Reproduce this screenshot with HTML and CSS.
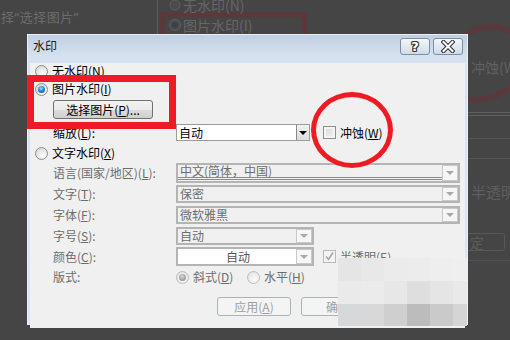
FILE: index.html
```html
<!DOCTYPE html>
<html lang="zh-CN">
<head>
  <meta charset="UTF-8" />
  <meta name="viewport" content="width=device-width, initial-scale=1.0"/>
  <title>水印</title>
  <link rel="stylesheet" href="styles.css">
</head>
<body>
  <div class="screen">
    <!-- dimmed screenshot behind the dialog -->
    <svg class="backdrop" width="510" height="340" viewBox="0 0 510 340">
      <line x1="157.5" y1="0" x2="157.5" y2="34" stroke="#5e5e5e"/>
      <circle cx="175" cy="5" r="5" fill="#4b4b4b" stroke="#5f5f5f"/>
      <circle cx="175" cy="25" r="5.5" fill="#4b4b4b" stroke="#5f5f5f"/>
      <circle cx="175" cy="25" r="2.8" fill="#36414c"/>
      <rect x="162.5" y="14.5" width="142" height="40" fill="none" stroke="#5b383c" stroke-width="5"/>
      <path d="M461 37 Q488 19 514 33" fill="none" stroke="#5b383c" stroke-width="5"/>
      <path d="M466 99 Q492 102 514 85" fill="none" stroke="#5b383c" stroke-width="5"/>
      <line x1="468" y1="112.5" x2="510" y2="112.5" stroke="#606060"/>
      <line x1="468" y1="115.5" x2="510" y2="115.5" stroke="#606060"/>
      <line x1="468" y1="138.5" x2="510" y2="138.5" stroke="#555"/>
      <line x1="468" y1="158.5" x2="510" y2="158.5" stroke="#555"/>
      <rect x="466.5" y="233.5" width="38" height="17" rx="2" fill="none" stroke="#585858"/>
      <line x1="468" y1="260.5" x2="510" y2="260.5" stroke="#515151"/>
    </svg>
    <span class="bg-text bg-caption">择“选择图片”</span>
    <span class="bg-text bg-opt1">无水印(N)</span>
    <span class="bg-text bg-opt2">图片水印(I)</span>
    <span class="bg-text bg-erode">冲蚀(W)</span>
    <span class="bg-text bg-semi">半透明</span>
    <span class="bg-text bg-ok">定</span>

    <div class="dialog">
      <div class="titlebar">
        <span class="title">水印</span>
        <div class="tb-buttons">
          <span class="tb-btn"><span class="help">?</span></span>
          <span class="tb-btn">
            <svg width="14" height="13" viewBox="0 0 14 13">
              <path d="M2.5 2 L11.5 11 M11.5 2 L2.5 11" stroke="#3a3a3a" stroke-width="4.2" stroke-linecap="square"/>
              <path d="M2.5 2 L11.5 11 M11.5 2 L2.5 11" stroke="#fff" stroke-width="2" stroke-linecap="square"/>
            </svg>
          </span>
        </div>
      </div>

      <div class="panel">
        <div class="row r-none">
          <span class="radio"></span>无水印(<u>N</u>)
        </div>
        <div class="row r-pic">
          <span class="radio on"></span>图片水印(<u>I</u>)
        </div>
        <div class="row r-choose">
          <span class="button">选择图片(<u>P</u>)...</span>
        </div>
        <div class="row r-scale">
          <span class="lbl">缩放(<u>L</u>):</span>
          <span class="select"><span class="val">自动</span><span class="drop"></span></span>
          <span class="check"></span>冲蚀(<u>W</u>)
        </div>
        <div class="row r-text">
          <span class="radio"></span>文字水印(<u>X</u>)
        </div>
        <div class="row r-lang off">
          <span class="lbl">语言(国家/地区)(<u>L</u>):</span>
          <span class="combo wide"><span class="val lined">中文(简体，中国)</span><span class="drop"></span></span>
        </div>
        <div class="row r-word off">
          <span class="lbl">文字(<u>T</u>):</span>
          <span class="combo wide"><span class="val">保密</span><span class="drop"></span></span>
        </div>
        <div class="row r-font off">
          <span class="lbl">字体(<u>F</u>):</span>
          <span class="combo wide"><span class="val">微软雅黑</span><span class="drop"></span></span>
        </div>
        <div class="row r-size off">
          <span class="lbl">字号(<u>S</u>):</span>
          <span class="combo short"><span class="val">自动</span><span class="drop"></span></span>
        </div>
        <div class="row r-color off">
          <span class="lbl">颜色(<u>C</u>):</span>
          <span class="combo short white"><span class="val centered">自动</span><span class="drop"></span></span>
          <span class="check checked">
            <svg width="11" height="11" viewBox="0 0 11 11"><path d="M2 5.5 L4.5 8.5 L9 1.5" fill="none" stroke="#a6a6a6" stroke-width="1.6"/></svg>
          </span>半透明(<u>E</u>)
        </div>
        <div class="row r-layout off">
          <span class="lbl">版式:</span>
          <span class="opt first"><span class="radio dim on"></span>斜式(<u>D</u>)</span>
          <span class="opt"><span class="radio dim"></span>水平(<u>H</u>)</span>
        </div>
        <div class="row r-buttons">
          <span class="btn">应用(<u>A</u>)</span>
          <span class="btn">确定</span>
          <span class="btn">取消</span>
        </div>
      </div>
    </div>

    <div class="mark-rect"></div>
    <div class="mark-ring"></div>

    <div class="mosaic">
      <span></span><span></span><span></span><span></span><span></span><span></span>
      <span></span><span></span><span></span><span></span><span></span><span></span>
      <span></span><span></span><span></span><span></span><span></span><span></span>
    </div>
  </div>
</body>
</html>
```

FILE: styles.css
```css
* {
  box-sizing: border-box;
}

body {
  margin: 0;
  background: #454545;
  font-family: "Noto Sans CJK SC", "Noto Sans", sans-serif;
}

.screen {
  position: relative;
  width: 510px;
  height: 340px;
  overflow: hidden;
  background: #454545;
}

.backdrop {
  position: absolute;
  left: 0;
  top: 0;
}

.bg-text {
  position: absolute;
  color: #666;
  font-size: 14px;
  line-height: 16px;
  white-space: nowrap;
}

.bg-caption {
  left: 1px;
  top: 9px;
  font-family: "Noto Sans", "Noto Sans CJK SC", sans-serif;
  font-size: 13px;
  letter-spacing: 0.5px;
  color: #6b6b6b;
}

.bg-opt1 {
  left: 183px;
  top: -3px;
}

.bg-opt2 {
  left: 183px;
  top: 17px;
}

.bg-erode {
  left: 471px;
  top: 59px;
  color: #616161;
}

.bg-semi {
  left: 471px;
  top: 184px;
  font-size: 15px;
  color: #5f5f5f;
}

.bg-ok {
  left: 470px;
  top: 234px;
  color: #5c5c5c;
}

/* dialog window */
.dialog {
  position: absolute;
  left: 27px;
  top: 34px;
  width: 441px;
  height: 291px;
  border: 1px solid #eaf0f7;
  background: linear-gradient(#c0d0e1, #d6e2ef 22px, #dae6f3);
}

.titlebar {
  height: 22px;
  display: flex;
  align-items: flex-start;
  justify-content: space-between;
  padding: 0 4px 0 5px;
}

.title {
  font-size: 12px;
  line-height: 22px;
  color: #1e1e1e;
}

.tb-buttons {
  display: flex;
  gap: 3px;
  margin-top: 3px;
}

.tb-btn {
  width: 30px;
  height: 17px;
  border: 1px solid #7b8ea6;
  border-radius: 3px;
  background: linear-gradient(#f4f7fb, #e2e9f2 50%, #d0dbe8);
  display: flex;
  align-items: center;
  justify-content: center;
}

.help {
  font-family: "DejaVu Sans", sans-serif;
  font-weight: bold;
  font-size: 13px;
  line-height: 13px;
  color: #fff;
  text-shadow: 1px 0 #3a3a3a, -1px 0 #3a3a3a, 0 1px #3a3a3a, 0 -1px #3a3a3a,
    1px 1px #3a3a3a, -1px -1px #3a3a3a, 1px -1px #3a3a3a, -1px 1px #3a3a3a;
}

.panel {
  margin: 0 2px;
  height: 265px;
  background: #f0f0f0;
  font-size: 12px;
  color: #000;
}

.panel u {
  text-underline-offset: 1px;
}

.row {
  display: flex;
  align-items: center;
  line-height: 16px;
  white-space: nowrap;
}

.r-none { margin-top: 6px; height: 16px; padding-left: 5px; }
.r-pic { margin-top: 2px; height: 16px; padding-left: 5px; }
.r-choose { margin-top: 3px; height: 19px; padding-left: 23px; }
.r-scale { margin-top: 5px; height: 17px; }
.r-text { margin-top: 4px; height: 16px; padding-left: 5px; }
.r-lang { margin-top: 2px; height: 20px; }
.r-word { margin-top: 2px; height: 18px; }
.r-font { margin-top: 3px; height: 18px; }
.r-size { margin-top: 3px; height: 18px; }
.r-color { margin-top: 2px; height: 19px; }
.r-layout { margin-top: 3px; height: 16px; }
.r-buttons { margin-top: 12px; height: 19px; padding-left: 187px; gap: 10px; }

.off {
  color: #6d6d6d;
}

.lbl {
  width: 123px;
  margin-left: 23px;
}

/* radio buttons and checkboxes */
.radio {
  width: 13px;
  height: 13px;
  margin-right: 4px;
  border: 1px solid #8e8f8f;
  border-radius: 50%;
  background: radial-gradient(circle at 60% 65%, #ffffff, #e6e6e6 50%, #cfcfcf);
  display: flex;
  align-items: center;
  justify-content: center;
}

.radio.on::after {
  content: "";
  width: 7px;
  height: 7px;
  border-radius: 50%;
  background: radial-gradient(circle at 45% 35%, #a6e0ff, #2a86d4 45%, #0b4a8c);
}

.radio.dim {
  border-color: #bcbcbc;
  background: radial-gradient(circle at 60% 65%, #fbfbfb, #ececec 55%, #dddddd);
}

.radio.dim.on::after {
  background: radial-gradient(circle at 45% 35%, #d8d8d8, #a9a9a9 50%, #8e8e8e);
}

.check {
  width: 13px;
  height: 13px;
  margin: 0 4px 0 13px;
  border: 1px solid #8e8f8f;
  background: linear-gradient(135deg, #d6d6d6, #f6f6f6);
  box-shadow: inset 0 0 0 2px #f4f4f4;
  display: flex;
  align-items: center;
  justify-content: center;
}

.check.checked {
  margin-left: 9px;
  border-color: #b9b9b9;
  background: #f4f4f4;
  box-shadow: none;
}

/* buttons */
.button {
  width: 100px;
  height: 19px;
  border: 1px solid #707070;
  border-radius: 3px;
  background: linear-gradient(#f2f2f2, #ebebeb 50%, #dddddd 51%, #cfcfcf);
  display: flex;
  align-items: center;
  justify-content: center;
}

.btn {
  width: 74px;
  height: 19px;
  border: 1px solid #adb2b5;
  border-radius: 3px;
  background: #f4f4f4;
  color: #a0a0a0;
  display: flex;
  align-items: center;
  justify-content: center;
}

/* drop-down boxes */
.select {
  width: 134px;
  height: 17px;
  border: 1px solid #9c9c9c;
  background: #fff;
  display: flex;
}

.val {
  flex: 1;
  padding-left: 2px;
  display: flex;
  align-items: center;
}

.select .drop {
  width: 13px;
  background: linear-gradient(#f2f2f2, #dcdcdc);
  border-left: 1px solid #8a8a8a;
  display: flex;
  align-items: center;
  justify-content: center;
}

.select .drop::after {
  content: "";
  border-left: 4px solid transparent;
  border-right: 4px solid transparent;
  border-top: 4px solid #000;
}

.combo {
  height: 100%;
  border: 2px solid #b4b4b4;
  background: #f0f0f0;
  display: flex;
}

.combo.wide {
  width: 284px;
}

.combo.short {
  width: 138px;
}

.combo.white {
  background: #fff;
}

.val.centered {
  justify-content: center;
  color: #555;
}

.val.lined {
  border-bottom: 3px double #8c8c8c;
  margin-bottom: 1px;
}

.combo .drop {
  width: 16px;
  border: 1px solid #c9c9c9;
  background: #f6f6f6;
  display: flex;
  align-items: center;
  justify-content: center;
}

.combo .drop::after {
  content: "";
  border-left: 4px solid transparent;
  border-right: 4px solid transparent;
  border-top: 4px solid #a8a8a8;
}

.opt {
  display: flex;
  align-items: center;
}

.opt.first {
  width: 71px;
}

/* red annotations */
.mark-rect {
  position: absolute;
  left: 27px;
  top: 75px;
  width: 149px;
  height: 54px;
  border: 7px solid #ed1c24;
}

.mark-ring {
  position: absolute;
  left: 311px;
  top: 92px;
  width: 82px;
  height: 76px;
  border: 5px solid #ed1c24;
  border-radius: 50%;
}

/* pixelated patch */
.mosaic {
  position: absolute;
  left: 338px;
  top: 258px;
  display: grid;
  grid-template-columns: 23px 23px 23px 23px 23px 14px;
  grid-template-rows: 23px 23px 22px;
}

.mosaic span:nth-child(1) { background: #e5e5e5; }
.mosaic span:nth-child(2) { background: #e8e8e8; }
.mosaic span:nth-child(3) { background: #ebebeb; }
.mosaic span:nth-child(4) { background: #ececec; }
.mosaic span:nth-child(5) { background: #eeeeee; }
.mosaic span:nth-child(6) { background: #efefef; }
.mosaic span:nth-child(7) { background: #eaeaea; }
.mosaic span:nth-child(8) { background: #ebebeb; }
.mosaic span:nth-child(9) { background: #e7e7e7; }
.mosaic span:nth-child(10) { background: #dedede; }
.mosaic span:nth-child(11) { background: #e5e5e5; }
.mosaic span:nth-child(12) { background: #e9e9e9; }
.mosaic span:nth-child(13) { background: #d7d8da; }
.mosaic span:nth-child(14) { background: #d8d8d8; }
.mosaic span:nth-child(15) { background: #cfcfcf; }
.mosaic span:nth-child(16) { background: #bcbcbc; }
.mosaic span:nth-child(17) { background: #cacacb; }
.mosaic span:nth-child(18) { background: #d5d5d5; }
```
